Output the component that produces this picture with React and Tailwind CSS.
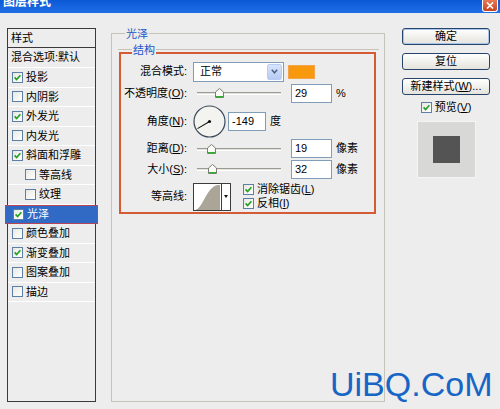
import React from 'react'

const FONT = { fontFamily: '"Liberation Sans", "Noto Sans CJK SC", sans-serif' }

const STYLES = [
  { name: '投影', on: true },
  { name: '内阴影', on: false },
  { name: '外发光', on: true },
  { name: '内发光', on: false },
  { name: '斜面和浮雕', on: true },
  { name: '等高线', on: false, sub: true },
  { name: '纹理', on: false, sub: true },
  { name: '光泽', on: true, active: true },
  { name: '颜色叠加', on: false },
  { name: '渐变叠加', on: true },
  { name: '图案叠加', on: false },
  { name: '描边', on: false },
]

function Box({ on }) {
  return (
    <span className="w-[11px] h-[11px] shrink-0 border border-[#5d7fa6] bg-linear-to-br from-[#e8e8e2] to-white flex items-center justify-center">
      {on && (
        <svg width="7" height="7" viewBox="0 0 7 7">
          <path d="M0.6 3.4 L2.6 5.6 L6.4 1.2" stroke="#22a022" strokeWidth="1.6" fill="none" />
        </svg>
      )}
    </span>
  )
}

function Slider({ pos }) {
  return (
    <div className="relative w-[98px] h-[12px] shrink-0">
      <div className="absolute left-[4px] w-[84px] top-[5px] h-[3px] bg-[#e4e2da] border-t border-[#9a9a94] border-b border-b-white" />
      <svg className="absolute top-[1px]" style={{ left: pos }} width="9" height="10" viewBox="0 0 9 10">
        <path d="M0.5 4 L4.5 0.5 L8.5 4 L8.5 9.5 L0.5 9.5 Z" fill="#fbfbf8" stroke="#7c7c74" />
        <path d="M1 8.7 H8" stroke="#2fb32f" strokeWidth="1.4" />
      </svg>
    </div>
  )
}

function Field({ value, w = 'w-[41px]' }) {
  return (
    <div className={`${w} h-[19px] shrink-0 border border-[#7f9db9] bg-white pl-[3px] flex items-center text-[11px]`}>
      {value}
    </div>
  )
}

function Label({ children }) {
  return <div className="w-[67px] shrink-0 text-right pr-[1px] whitespace-nowrap">{children}</div>
}

const U = ({ c }) => <span className="underline">{c}</span>

export default function App() {
  return (
    <div className="w-[500px] h-[409px] bg-[#ededed] relative overflow-hidden text-[11px] text-black" style={FONT}>
      {/* title bar */}
      <div className="h-[13px] bg-linear-to-b from-[#0b58d6] to-[#1f6fe6] flex justify-between overflow-hidden">
        <span className="pl-[3px] -mt-[5px] text-white font-bold text-[12px] leading-[14px]">图层样式</span>
        <span className="mr-[2px] w-[16px] h-[12px] rounded-b-[3px] border border-t-0 border-white bg-linear-to-b from-[#e77a55] to-[#c9411c] flex items-center justify-center">
          <svg width="8" height="7" viewBox="0 0 8 7">
            <path d="M1 0.5 L7 6.5 M7 0.5 L1 6.5" stroke="white" strokeWidth="1.6" />
          </svg>
        </span>
      </div>

      <div className="flex pl-[7px] pt-[15px]">
        {/* styles list */}
        <div className="w-[89px] h-[374px] border border-[#3a3a3a] bg-[#ededed] shrink-0">
          <div className="h-[19px] border-b border-[#3a3a3a] pl-[3px] flex items-center">样式</div>
          <div className="h-[20px] border-b border-white pl-[3px] flex items-center whitespace-nowrap">混合选项:默认</div>
          {STYLES.map((s) =>
            s.active ? (
              <div key={s.name} className="h-[19.5px] -mx-[3px] border border-[#b44458] bg-[#316ac5] text-white flex items-center gap-[3px] pl-[7px]">
                <Box on={s.on} />
                <span>{s.name}</span>
              </div>
            ) : (
              <div key={s.name} className={`h-[19.5px] border-b border-white flex items-center gap-[3px] ${s.sub ? 'pl-[17px]' : 'pl-[4px]'}`}>
                <Box on={s.on} />
                <span>{s.name}</span>
              </div>
            )
          )}
        </div>

        {/* 光泽 group */}
        <div className="relative ml-[15px] mt-[5px] w-[274px] h-[369px] border border-[#c6c4b8] shrink-0">
          <span className="absolute -top-[8px] left-[13px] px-[1px] bg-[#ededed] text-[#2256c8]">光泽</span>
          <div className="relative ml-[6px] mt-[15px] w-[261px] border-t border-[#c6c4b8]">
            <span className="absolute -top-[8px] left-[14px] px-[1px] bg-[#ededed] text-[#2256c8]">结构</span>
            <div className="ml-[1px] mt-[2px] w-[257px] h-[162px] border-2 border-[#d55a36] pt-[7px]">
              <div className="h-[21px] flex items-center">
                <Label>混合模式:</Label>
                <div className="ml-[5px] w-[91px] h-[20px] border border-[#7f9db9] bg-white flex items-center justify-between pl-[6px] pr-[1px]">
                  <span>正常</span>
                  <span className="w-[15px] h-[16px] rounded-[2px] bg-linear-to-b from-[#d8e4fc] to-[#b6cbf5] border border-[#b9cdf4] flex items-center justify-center">
                    <svg width="7" height="5" viewBox="0 0 7 5">
                      <path d="M0.8 0.8 L3.5 3.8 L6.2 0.8" stroke="#4d6185" strokeWidth="1.5" fill="none" />
                    </svg>
                  </span>
                </div>
                <div className="ml-[4px] w-[27px] h-[14px] bg-[#f7980d] border border-[#f2a54a]" />
              </div>

              <div className="h-[22px] flex items-center">
                <Label>不透明度(<U c="O" />):</Label>
                <div className="ml-[5px] flex items-center">
                  <Slider pos={22} />
                  <Field value="29" />
                  <span className="ml-[4px]">%</span>
                </div>
              </div>

              <div className="h-[34px] flex items-center">
                <Label>角度(<U c="N" />):</Label>
                <svg className="ml-[5px] shrink-0" width="33" height="33" viewBox="0 0 33 33">
                  <circle cx="16.5" cy="16.5" r="15.5" fill="#f3f3f0" stroke="#3c4a5a" strokeWidth="1.2" />
                  <path d="M16.5 16.5 L4.5 23.6" stroke="#111" strokeWidth="1.1" />
                  <circle cx="16.5" cy="16.5" r="1.6" fill="#111" />
                </svg>
                <div className="ml-[2px]">
                  <Field value="-149" w="w-[38px]" />
                </div>
                <span className="ml-[4px]">度</span>
              </div>

              <div className="h-[21px] flex items-center">
                <Label>距离(<U c="D" />):</Label>
                <div className="ml-[5px] flex items-center">
                  <Slider pos={14} />
                  <Field value="19" />
                  <span className="ml-[4px]">像素</span>
                </div>
              </div>

              <div className="h-[20px] flex items-center">
                <Label>大小(<U c="S" />):</Label>
                <div className="ml-[5px] flex items-center">
                  <Slider pos={15} />
                  <Field value="32" />
                  <span className="ml-[4px]">像素</span>
                </div>
              </div>

              <div className="h-[31px] mt-[2px] flex items-center">
                <Label>等高线:</Label>
                <svg className="ml-[5px] shrink-0" width="38" height="28" viewBox="0 0 38 28">
                  <rect x="0.5" y="0.5" width="37" height="27" fill="#ffffff" stroke="#3c3c3c" />
                  <path d="M2 27 C 10 26, 13 4, 25 2 L 27 2 L 27 27 Z" fill="#aaa597" />
                  <path d="M28.5 1 V27" stroke="#3c3c3c" />
                  <path d="M31 12 L35 12 L33 15 Z" fill="#111" />
                </svg>
                <div className="ml-[12px] flex flex-col gap-[1px]">
                  <div className="h-[13px] flex items-center gap-[3px]">
                    <Box on />
                    <span>消除锯齿(<U c="L" />)</span>
                  </div>
                  <div className="h-[13px] flex items-center gap-[3px]">
                    <Box on />
                    <span>反相(<U c="I" />)</span>
                  </div>
                </div>
              </div>
            </div>
          </div>
        </div>

        {/* buttons + preview */}
        <div className="ml-[17px] w-[88px] flex flex-col items-center shrink-0">
          <button className="w-[88px] h-[17px] rounded-[3px] border border-[#27456b] bg-linear-to-b from-white to-[#e4e3dc] shadow-[inset_0_0_0_1px_#a9c3ea] flex items-center justify-center">确定</button>
          <button className="mt-[8px] w-[88px] h-[17px] rounded-[3px] border border-[#27456b] bg-linear-to-b from-white to-[#e4e3dc] flex items-center justify-center">复位</button>
          <button className="mt-[8px] w-[88px] h-[17px] rounded-[3px] border border-[#27456b] bg-linear-to-b from-white to-[#e4e3dc] flex items-center justify-center whitespace-nowrap">新建样式(<U c="W" />)...</button>
          <div className="mt-[6px] h-[13px] flex items-center gap-[3px]">
            <Box on />
            <span>预览(<U c="V" />)</span>
          </div>
          <div className="mt-[7px] w-[59px] h-[57px] bg-[#d8d8d6] border border-[#f4f4f4] flex items-center justify-center">
            <div className="w-[27px] h-[27px] bg-[#545454]" />
          </div>
        </div>
      </div>

      <span className="absolute left-[330px] top-[367px] text-[34px] leading-[34px] text-[#1766c6]" style={{ fontFamily: '"Liberation Sans", sans-serif' }}>
        UiBQ.CoM
      </span>
    </div>
  )
}
